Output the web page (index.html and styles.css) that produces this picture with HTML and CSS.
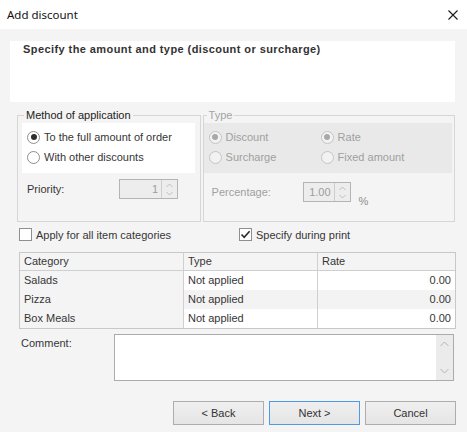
FILE: index.html
```html
<!DOCTYPE html>
<html>
<head>
<meta charset="utf-8">
<link rel="stylesheet" href="styles.css">
</head>
<body>
<div class="window">
  <div class="titlebar">
    <span class="title">Add discount</span>
    <svg class="close" width="10" height="10" viewBox="0 0 10 10"><path d="M0.5 0.5 L9.5 9.5 M9.5 0.5 L0.5 9.5" stroke="#1a1a1a" stroke-width="1.1" fill="none"/></svg>
  </div>

  <div class="header">
    <p class="header-text">Specify the amount and type (discount or surcharge)</p>
  </div>

  <div class="groups">
    <div class="group group-method">
      <span class="legend">Method of application</span>
      <div class="panel panel-white">
        <div class="radio-row"><span class="radio checked"></span><span>To the full amount of order</span></div>
        <div class="radio-row"><span class="radio"></span><span>With other discounts</span></div>
      </div>
      <div class="field-row priority-row">
        <span class="field-label priority-label">Priority:</span>
        <div class="spin spin-priority">
          <span class="spin-value">1</span>
          <span class="spin-btns">
            <svg width="7" height="5" viewBox="0 0 7 5"><path d="M0.5 4 L3.5 1 L6.5 4" stroke="#bdbdbd" fill="none"/></svg>
            <svg width="7" height="5" viewBox="0 0 7 5"><path d="M0.5 1 L3.5 4 L6.5 1" stroke="#bdbdbd" fill="none"/></svg>
          </span>
        </div>
      </div>
    </div>

    <div class="group group-type disabled">
      <span class="legend legend-type">Type</span>
      <div class="panel panel-gray">
        <div class="radio-grid">
          <div class="radio-row"><span class="radio checked"></span><span>Discount</span></div>
          <div class="radio-row"><span class="radio checked"></span><span>Rate</span></div>
          <div class="radio-row"><span class="radio"></span><span>Surcharge</span></div>
          <div class="radio-row"><span class="radio"></span><span>Fixed amount</span></div>
        </div>
      </div>
      <div class="field-row percent-row">
        <span class="field-label percent-label">Percentage:</span>
        <div class="spin spin-percent">
          <span class="spin-value">1.00</span>
          <span class="spin-btns">
            <svg width="7" height="5" viewBox="0 0 7 5"><path d="M0.5 4 L3.5 1 L6.5 4" stroke="#bdbdbd" fill="none"/></svg>
            <svg width="7" height="5" viewBox="0 0 7 5"><path d="M0.5 1 L3.5 4 L6.5 1" stroke="#bdbdbd" fill="none"/></svg>
          </span>
        </div>
        <span class="percent-sign">%</span>
      </div>
    </div>
  </div>

  <div class="checks">
    <div class="check-item check-first"><span class="checkbox"></span><span>Apply for all item categories</span></div>
    <div class="check-item"><span class="checkbox checked"><svg width="11" height="11" viewBox="0 0 11 11"><path d="M1.5 5.5 L4.2 8.3 L9.6 2.2" stroke="#2b2b2b" stroke-width="1.6" fill="none"/></svg></span><span>Specify during print</span></div>
  </div>

  <div class="grid-table">
    <div class="cell head c1">Category</div>
    <div class="cell head c2">Type</div>
    <div class="cell head c3">Rate</div>

    <div class="cell c1">Salads</div>
    <div class="cell c2">Not applied</div>
    <div class="cell c3 num">0.00</div>

    <div class="cell c1">Pizza</div>
    <div class="cell c2 alt">Not applied</div>
    <div class="cell c3 num alt">0.00</div>

    <div class="cell c1">Box Meals</div>
    <div class="cell c2">Not applied</div>
    <div class="cell c3 num">0.00</div>
  </div>

  <div class="comment-row">
    <span class="comment-label">Comment:</span>
    <div class="comment-box">
      <div class="comment-text"></div>
      <div class="scrollbar">
        <svg width="9" height="6" viewBox="0 0 9 6"><path d="M0.5 5 L4.5 1 L8.5 5" stroke="#b5b5b5" fill="none"/></svg>
        <svg width="9" height="6" viewBox="0 0 9 6"><path d="M0.5 1 L4.5 5 L8.5 1" stroke="#b5b5b5" fill="none"/></svg>
      </div>
    </div>
  </div>

  <div class="buttons">
    <div class="btn">&lt; Back</div>
    <div class="btn btn-default">Next &gt;</div>
    <div class="btn">Cancel</div>
  </div>
</div>
</body>
</html>
```

FILE: styles.css
```css
* { box-sizing: border-box; }
html, body { margin: 0; padding: 0; }
body {
  width: 467px;
  height: 432px;
  overflow: hidden;
  background: #f4f4f4;
  font-family: "Liberation Sans", Arial, sans-serif;
  font-size: 11px;
  color: #363636;
}
.window { width: 467px; height: 432px; }

.titlebar {
  height: 29px;
  background: #ffffff;
  display: flex;
  align-items: center;
  justify-content: space-between;
  padding: 0 9px 0 7px;
}
.title {
  font-family: "Noto Sans", "Open Sans", sans-serif;
  font-size: 11.5px;
  color: #111;
  line-height: 16px;
}
.close { display: block; }

.header {
  margin: 12px 12px 0 10px;
  height: 61px;
  background: #ffffff;
}
.header-text {
  margin: 0;
  padding: 2px 0 0 13px;
  font-weight: bold;
  line-height: 13px;
  letter-spacing: 0.42px;
  color: #333;
}

.groups {
  display: flex;
  gap: 2px;
  margin: 13px 12px 0 17px;
}
.group {
  position: relative;
  height: 107px;
  border: 1px solid #d6d6d6;
}
.group-method { width: 184px; }
.group-type { width: 253px; }
.legend {
  position: absolute;
  top: -7px;
  left: 6px;
  padding: 0 2px;
  line-height: 13px;
  background: #f4f4f4;
  color: #222;
}
.legend-type { left: 3px; color: #a3a3a3; }

.panel {
  height: 50px;
  margin-top: 7px;
  padding-top: 4px;
}
.panel-white { background: #ffffff; margin-left: 4px; margin-right: 5px; }
.panel-gray { background: #e9e9e9; margin-left: 0; margin-right: 2px; }

.radio-row {
  display: flex;
  align-items: center;
  gap: 4px;
  height: 20px;
  padding-left: 5px;
  white-space: nowrap;
}
.radio-grid {
  display: grid;
  grid-template-columns: 112px auto;
}
.radio {
  position: relative;
  width: 13px;
  height: 13px;
  flex: none;
  border-radius: 50%;
  border: 1px solid #8f8f8f;
  background: #ffffff;
}
.radio.checked::after {
  content: "";
  position: absolute;
  left: 2.5px;
  top: 2.5px;
  width: 6px;
  height: 6px;
  border-radius: 50%;
  background: #2e2e2e;
}
.disabled .radio { border-color: #c4c4c4; background: #f2f2f2; }
.disabled .radio.checked::after { background: #a8a8a8; }
.disabled { color: #a0a0a0; }

.field-row {
  display: flex;
  align-items: center;
}
.priority-row { margin-top: 6px; padding-left: 9px; }
.percent-row { margin-top: 9px; padding-left: 8px; }
.priority-label { width: 92px; }
.percent-label { width: 91px; }

.spin {
  display: flex;
  height: 20px;
  border: 1px solid #b4b4b4;
  background: #ededed;
  color: #9c9c9c;
}
.spin-priority { width: 59px; }
.spin-percent { width: 48px; }
.spin-value {
  flex: 1;
  text-align: right;
  padding-right: 3px;
  line-height: 18px;
}
.spin-btns {
  width: 16px;
  border-left: 1px solid #cdcdcd;
  display: flex;
  flex-direction: column;
  align-items: center;
  justify-content: space-around;
  padding: 1px 0;
}
.spin-btns svg { display: block; }
.percent-sign {
  margin-left: 8px;
  align-self: flex-end;
  margin-bottom: -5px;
  color: #8e8e8e;
}

.checks {
  display: flex;
  margin: 6px 12px 0 19px;
  height: 13px;
  align-items: center;
}
.check-item {
  display: flex;
  align-items: center;
  gap: 4px;
}
.check-first { width: 220px; }
.checkbox {
  width: 13px;
  height: 13px;
  flex: none;
  border: 1px solid #8f8f8f;
  background: #ffffff;
  display: flex;
  align-items: center;
  justify-content: center;
}
.checkbox svg { display: block; }

.grid-table {
  display: grid;
  grid-template-columns: 164px 134px 137px;
  width: 437px;
  margin: 11px 0 0 19px;
  border: 1px solid #c8c8c8;
}
.cell {
  height: 19px;
  line-height: 19px;
  padding: 0 4px;
  white-space: nowrap;
}
.cell.head {
  height: 18px;
  line-height: 17px;
  border-bottom: 1px solid #cfcfcf;
  background: #f4f4f4;
}
.c1 { border-right: 1px solid #cfcfcf; background: #f4f4f4; }
.c2 { border-right: 1px solid #cfcfcf; background: #ffffff; }
.c3 { background: #ffffff; }
.cell.alt { background: #f3f3f3; }
.num { text-align: right; }

.comment-row {
  display: flex;
  margin: 5px 0 0 21px;
}
.comment-label {
  width: 93px;
  padding-top: 3px;
  line-height: 13px;
}
.comment-box {
  display: flex;
  width: 340px;
  height: 47px;
  border: 1px solid #ababab;
  background: #ffffff;
}
.comment-text { flex: 1; }
.scrollbar {
  width: 17px;
  background: #ebebeb;
  display: flex;
  flex-direction: column;
  align-items: center;
  justify-content: space-between;
  padding: 6px 0 6px;
}
.scrollbar svg { display: block; }

.buttons {
  display: flex;
  justify-content: flex-end;
  gap: 5px;
  margin-top: 20px;
  padding-right: 11px;
}
.btn {
  width: 91px;
  height: 24px;
  border: 1px solid #adadad;
  background: linear-gradient(#efefef, #e5e5e5);
  text-align: center;
  line-height: 22px;
  font-size: 11px;
  color: #333;
}
.btn-default { border-color: #4d9be8; }
```
